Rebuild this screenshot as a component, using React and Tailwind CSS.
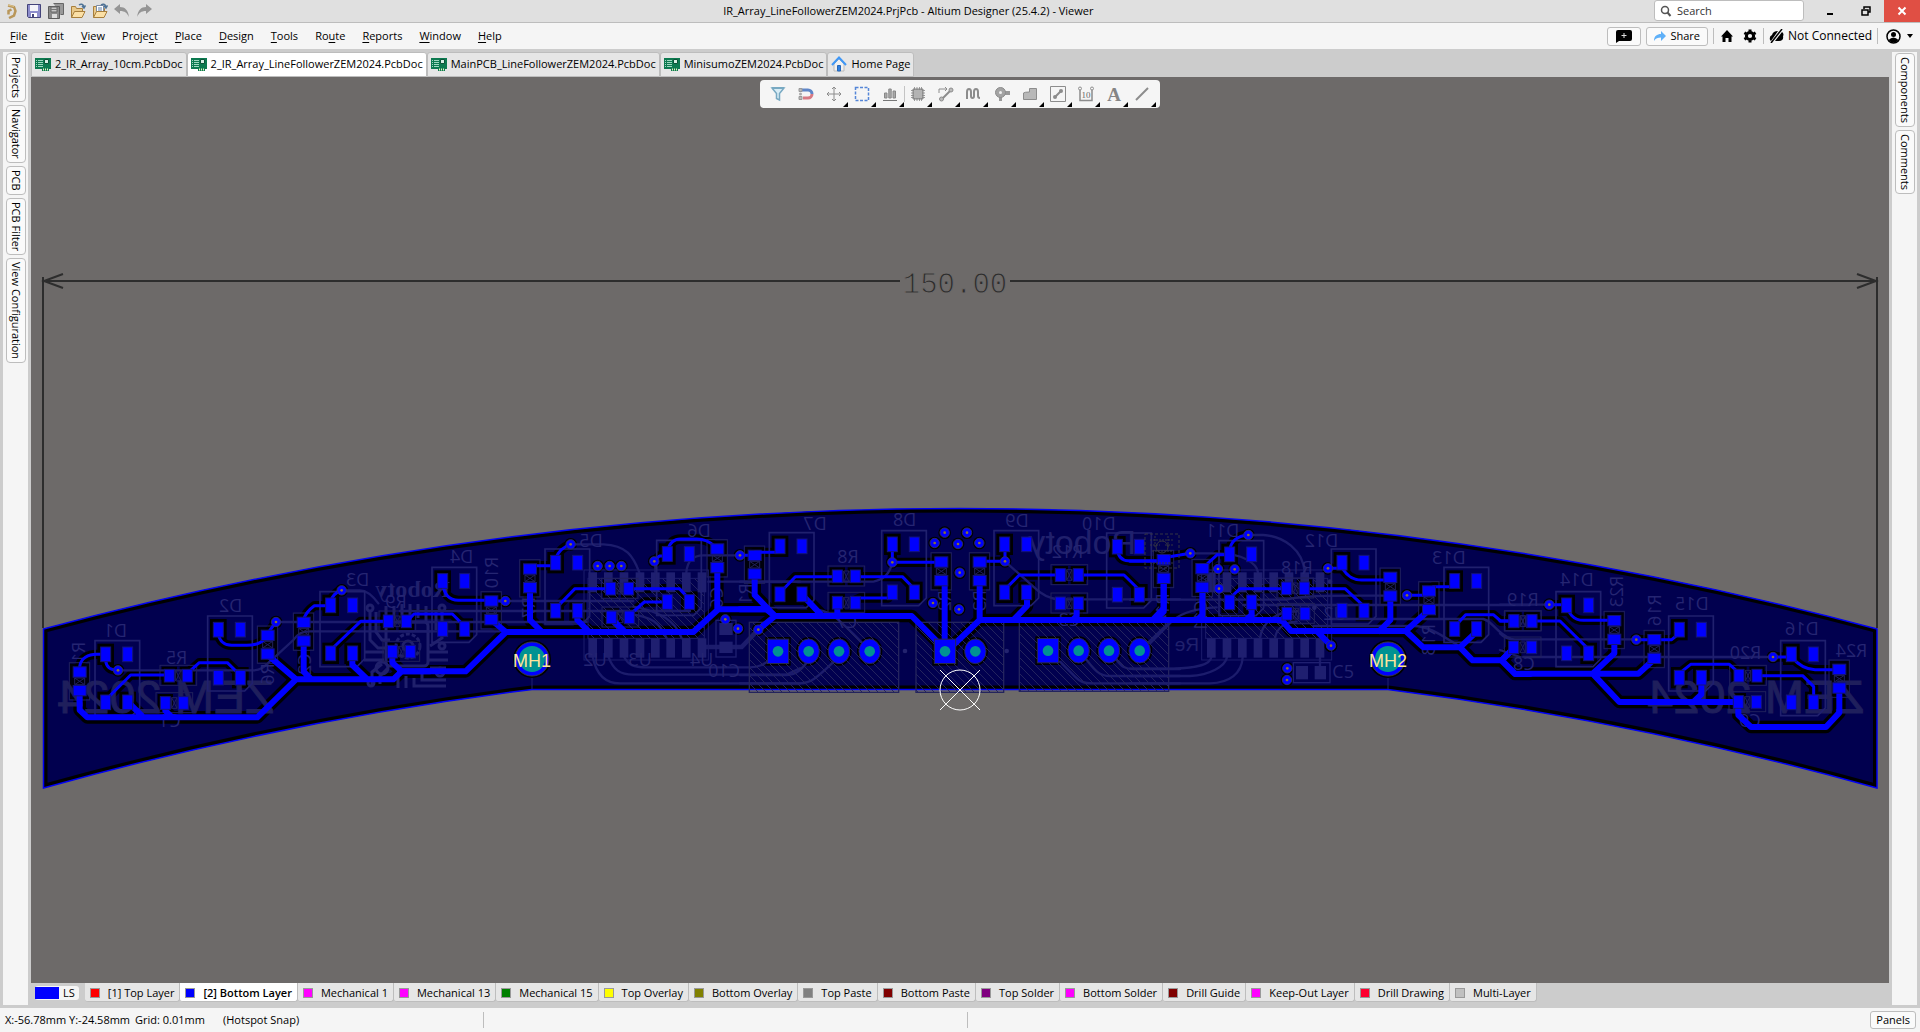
import React from "react";

/* ---------- board data: one entry per region of the board, in units of 1/3 px ---------- */
// D: LED footprints [x, y, cleared pads (TL,TR,BL,BR)], V: vertical 0603, H: horizontal 0603
const SECTIONS = [
  {
    o: [30, 500],
    D: [[195, 422, "1011"], [533, 348, "1001"], [870, 275, "1011"]],
    V: [[149, 544], [713, 434], [821, 395]],
    H: [[445, 527, "11"], [433, 609, "10"], [1102, 364, "11"], [1114, 455, "10"]],
    vias: [[264, 511], [738, 366], [935, 271]],
    thin: "M149 500C152 475 175 463 200 463H214M227 480C228 500 240 511 264 511M227 600L302 525H405M472 520L508 488H592L630 525M565 400C568 425 585 436 605 436H650C675 436 695 428 705 415M713 400L738 366M821 360C824 345 835 330 853 317H900M902 305C905 290 918 275 935 271M902 450L992 364H1075",
    thick: "M149 575V630L172 652H682L798 538H1090L1115 514H1200M713 465L798 538M821 430V515L842 536M967 465V495L1010 536M1087 460V488L1115 514M293 605L338 650M406 612V632L424 650",
    faint: "M264 511H670C700 511 710 490 740 466L790 420C805 400 815 394 840 394H1200M738 366H1200M935 271H990C1010 271 1030 290 1045 310",
    labels: [["D1", 291, 410], ["D2", 637, 336], ["D3", 1018, 257], ["R5", 472, 493], ["C1", 452, 680], ["R1", 166, 425, 90], ["R6", 732, 490, 90], ["C2", 842, 460, 90], ["R9", 1130, 325]],
  },
  {
    o: [400, 500],
    D: [[96, 202, "1001"], [435, 147, "1011"], [770, 121, "1001"]],
    V: [[274, 331], [390, 235], [952, 175], [1064, 194]],
    H: [[659, 266, "11"], [661, 352, "10"]],
    vias: [[316, 303], [512, 133], [593, 198], [629, 198], [664, 198], [763, 184], [1020, 166], [976, 358], [1014, 386], [1075, 389]],
    thin: "M128 250C132 285 150 300 175 301H260M274 303H316M20 365L42 342H157L195 380M390 197H455M467 175C475 155 490 140 512 133M467 325L525 266H620M700 266H838L869 298M688 345L733 306H790M763 184L778 168H795M803 150C810 125 825 117 842 117H890C915 117 930 125 945 140M1020 166H1055",
    thick: "M0 514H197L318 396H880L955 328H1100L1125 348H1200M390 270V360L425 395M532 330V360L565 393M633 355L675 396M274 360L318 396M952 205V328M1064 225V285L1125 348L1075 389",
    faint: "M0 366H560M0 333H870M0 394H300M316 303H700M512 133H610C680 135 700 170 718 217M859 217C862 180 880 166 910 166H1020M766 184V217M925 245H1200M578 470C590 530 620 550 660 550H1200M625 470C640 510 660 524 700 524H1160L1200 505M672 470C685 495 700 502 740 502H1050C1080 502 1095 490 1110 480M680 340C760 350 780 370 800 415M700 320C790 335 830 370 845 415",
    faintWide: "M906 441H1025L1075 389",
    labels: [["D4", 220, 188], ["D5", 608, 140], ["D6", 932, 112], ["R10", 294, 170, 90], ["R7", 406, 290, 90], ["U3", 755, 497], ["C10", 1020, 530], ["U2", 620, 497], ["C6", 968, 260, 90], ["R11", 1056, 250, 90], ["U4", 940, 497]],
    ic: [552, 210, 925, 480, [578, 625, 672, 720, 766, 812, 859, 906]],
    cap: [978, 415, true],
  },
  {
    o: [740, 490],
    D: [[88, 128, "1011"], [425, 122, "1001"], [762, 122, "1011"], [1100, 129, "1001"]],
    V: [[604, 244], [719, 244]],
    H: [[319, 259, "11"], [319, 338, "10"], [988, 255, "11"], [988, 340, "01"]],
    vias: [[614, 128], [681, 128], [584, 159], [654, 162], [718, 159], [659, 248], [657, 358], [579, 339], [457, 217], [795, 214]],
    thin: "M44 187H110M120 308L166 260H290M346 260H487L523 297M346 330L360 324H445M457 170V217H600M719 214H795V170M795 298L838 255H960M1015 255H1152L1198 300M1132 175C1134 200 1145 212 1165 212H1270",
    thick: "M0 358H80L105 378H515L615 478M187 315L245 376M292 340V376M614 275V470M719 275V390L635 470M719 390H1320M861 310V348L822 388M1010 345V378L1000 388M1271 265V355L1240 388",
    faint: "M0 555H140C165 555 180 545 206 510M0 580H180C210 580 225 570 297 500M0 275H400C430 270 450 250 457 217M235 360C270 365 290 380 370 462M795 214L880 290C900 310 930 328 960 328H1320M960 515L1005 560C1020 575 1030 580 1060 580H1320M1040 510C1060 535 1075 558 1110 558H1320M1130 510C1145 530 1155 537 1180 537H1320M1199 482L1285 400",
    labels: [["D7", 260, 121], ["D8", 529, 107], ["D9", 866, 111], ["D10", 1127, 119], ["R8", 356, 218], ["R12", 1030, 205], ["C7", 352, 415], ["C3", 1020, 408], ["R2", 632, 300, 90], ["R3", 738, 300, 90]],
    headers: [[28, 397, 448, 210], [528, 397, 263, 210], [838, 397, 448, 207]],
    sq: [[114, 484], [615, 484], [924, 482]],
    oval: [[206, 484], [297, 484], [389, 484], [706, 484], [1016, 482], [1107, 482], [1199, 482]],
    black: "M135 280H172V345H135Z",
    dots: [[495, 483], [800, 483]],
  },
  {
    o: [1130, 500],
    D: [[267, 122, "1011"], [604, 147, "1001"], [942, 202, "1011"]],
    V: [[101, 207], [217, 234], [781, 260], [897, 301]],
    H: [[496, 265, "11"], [498, 341, "10"], [1178, 364, "11"]],
    vias: [[181, 160], [355, 105], [264, 207], [314, 208], [267, 266], [594, 205], [831, 286], [603, 437], [472, 505], [471, 540]],
    thin: "M0 184H95L118 170L181 160M217 205L262 164H299M299 150C303 125 320 108 355 105M299 295L330 266H468M523 266H645L703 320M594 205H637C650 225 665 240 695 240H781M831 286H890M897 272L910 260H970M974 380L1007 344H1090L1112 363H1150",
    thick: "M0 360H455L483 393H827L880 442H990L1028 481H1115L1155 522H1200M101 240V335L75 360M217 265V345L203 358M365 310V345L350 358M471 345L453 362M781 290V360L748 393M897 330L827 393M560 393L603 437M1040 388V395L990 442M1150 445L1115 481",
    faint: "M355 105H400C460 108 520 150 524 217M181 160H260C340 160 380 190 384 217M0 550H240C300 548 335 520 338 472M0 528H180C240 525 285 500 291 472M0 506H130C190 505 240 495 244 472M60 430L130 360C160 335 200 325 260 322M340 315H1200M600 357H1060C1090 365 1100 400 1140 415M570 472V520M0 299H470C520 285 600 287 760 287M390 415C395 370 440 330 500 335M435 415C440 380 470 365 500 365M550 378H850C900 378 940 410 990 440",
    labels: [["D11", 328, 112], ["D12", 625, 140], ["D13", 1007, 191], ["R18", 548, 222], ["U2", 650, 360], ["R13", 916, 372, 90], ["R14", 118, 280, 90], ["C11", 232, 300, 90]],
    plain: [["C5", 607, 533]],
    ic: [215, 210, 605, 480, [244, 291, 337, 384, 431, 477, 524, 570]],
    cap: [544, 518, false],
    black: "M990 352H1024V420H990Z",
    dots: [[553, 323], [600, 245]],
  },
  {
    o: [1500, 530],
    D: [[168, 185, "1001"], [506, 258, "1011"], [842, 332, "1001"]],
    V: [[343, 300], [463, 357], [1018, 446]],
    H: [[69, 273, "11"], [68, 352, "10"], [744, 437, "11"], [742, 516, "10"]],
    vias: [[148, 224], [409, 329], [819, 381]],
    thin: "M0 273H41M96 273H180L260 352M148 224H201C205 250 220 271 250 271H343M409 329H515L538 310M538 430L572 403H688L716 428M772 437H908L941 470V505M819 381H875C895 405 915 418 945 419H1018",
    thick: "M5 391L45 431H278L358 516H715V555L753 591H978L1018 548V475M41 355L5 391M343 330V370L278 431H415L463 388M604 445V493L582 514",
    faint: "M0 224H148M0 310C15 325 25 328 45 328H409M70 381H819M60 381L0 360",
    labels: [["D14", 281, 167], ["D15", 626, 241], ["D16", 956, 315], ["R19", 116, 228], ["R20", 784, 388], ["R24", 1102, 380], ["C8", 104, 420], ["C9", 782, 592], ["R23", 369, 137, 90], ["R16", 484, 193, 90]],
  },
];

const PADS = [[32, 41], [98, 41], [32, 185], [98, 185]];

function Sec({ s, children }) {
  return <g transform={`translate(${s.o[0]} ${s.o[1]}) scale(0.33333)`}>{children}</g>;
}

function Rects({ list, w, h, fill, stroke }) {
  return list.map(([x, y], i) => (
    <rect key={i} x={x - w / 2} y={y - h / 2} width={w} height={h} fill={fill} stroke={stroke} strokeWidth={stroke ? 3 : 0} />
  ));
}

function Clearance({ s }) {
  const led = [];
  s.D.forEach(([x, y, m]) => PADS.forEach(([px, py], i) => m[i] === "1" && led.push([x + px, y + py])));
  const hp = [];
  s.H.forEach(([x, y, m]) => [-27, 27].forEach((d, i) => m[i] === "1" && hp.push([x + d, y])));
  return (
    <Sec s={s}>
      <g fill="none" stroke="#000" strokeLinecap="round" strokeLinejoin="round">
        <path d={s.thin} strokeWidth="28" />
        <path d={s.thick} strokeWidth="38" />
      </g>
      <Rects list={led} w={50} h={64} fill="#000" />
      <Rects list={hp} w={46} h={54} fill="#000" />
      {s.V.map(([x, y], i) => (
        <rect key={i} x={x - 29} y={y - 53} width="58" height="106" fill="#000" opacity="0.85" />
      ))}
      {s.vias.map(([x, y], i) => <circle key={i} cx={x} cy={y} r="19" fill="#000" />)}
      {s.black && <path d={s.black} fill="#000" />}
      {s.sq && <Rects list={s.sq} w={76} h={86} fill="#000" />}
      {s.oval && s.oval.map(([x, y], i) => <ellipse key={i} cx={x} cy={y} rx="38" ry="43" fill="#000" />)}
    </Sec>
  );
}

function Label({ d, mirror = true }) {
  const [t, x, y, r] = d;
  const tf = r ? `translate(${x} ${y}) rotate(-90) scale(-1 1)` : mirror ? `translate(${x} ${y}) scale(-1 1)` : `translate(${x} ${y})`;
  return (
    <text transform={tf} fontSize="54" fill="#252572" fontFamily="'Open Sans','Noto Sans',sans-serif">
      {t}
    </text>
  );
}

function Overlay({ s }) {
  return (
    <Sec s={s}>
      <g fill="none" stroke="#1c1c6c" strokeLinecap="round">
        <path d={s.faint} strokeWidth="7" />
        {s.faintWide && <path d={s.faintWide} strokeWidth="14" />}
      </g>
      {s.headers && s.headers.map(([x, y, w, h], i) => (
        <rect key={i} x={x} y={y} width={w} height={h} fill="url(#hatch)" stroke="#24245e" strokeWidth="4" />
      ))}
      {s.ic && (
        <g>
          <rect x={s.ic[0]} y={s.ic[1]} width={s.ic[2] - s.ic[0]} height={s.ic[3] - s.ic[1]} fill="none" stroke="#1c1c6c" strokeWidth="3" />
          <rect x={s.ic[0] + 12} y={s.ic[1] + 25} width={s.ic[2] - s.ic[0] - 24} height="180" fill="url(#hatch)" stroke="#1c1c6c" strokeWidth="3" />
          {s.ic[4].map((x) => (
            <g key={x} fill="#1f1f70">
              <rect x={x - 13} y="217" width="26" height="60" />
              <rect x={x - 13} y="415" width="26" height="58" />
            </g>
          ))}
        </g>
      )}
      {s.cap && (
        <g transform={`translate(${s.cap[0]} ${s.cap[1]})${s.cap[2] ? " rotate(90)" : ""}`}>
          <rect x="-54" y="-30" width="110" height="60" fill="none" stroke="#1f1f70" strokeWidth="4" />
          <rect x="-46" y="-20" width="36" height="40" fill="#1f1f70" />
          <rect x="10" y="-20" width="34" height="40" fill="#1f1f70" />
        </g>
      )}
      {s.D.map(([x, y], i) => (
        <path key={i} d={`M${x} ${y}h134v202l-23 23h-111z`} fill="none" stroke="#20206e" strokeWidth="5" />
      ))}
      {s.V.map(([x, y], i) => (
        <g key={i} fill="none" stroke="#20205c" strokeWidth="3">
          <rect x={x - 31} y={y - 56} width="61" height="112" />
          <path d={`M${x - 15} ${y - 10}h30v20h-30zl30 20m0-20l-30 20`} />
        </g>
      ))}
      {s.H.map(([x, y], i) => (
        <g key={i} fill="none" stroke="#20205c" strokeWidth="3">
          <rect x={x - 55} y={y - 31} width="110" height="60" />
          <path d={`M${x - 8} ${y - 16}h16v32h-16zl16 32m0-32l-16 32`} />
        </g>
      ))}
      {s.dots && s.dots.map(([x, y], i) => <circle key={i} cx={x} cy={y} r="7" fill="#23236e" />)}
      {s.labels.map((d, i) => <Label key={i} d={d} />)}
      {s.plain && s.plain.map((d, i) => <Label key={i} d={d} mirror={false} />)}
    </Sec>
  );
}

function Copper({ s }) {
  const led = [];
  s.D.forEach(([x, y]) => PADS.forEach(([px, py]) => led.push([x + px, y + py])));
  const h = s.H.flatMap(([x, y]) => [[x - 27, y], [x + 27, y]]);
  const v = s.V.flatMap(([x, y]) => [[x, y - 28], [x, y + 28]]);
  return (
    <Sec s={s}>
      <g fill="none" stroke="#0000ff" strokeLinecap="round" strokeLinejoin="round">
        <path d={s.thin} strokeWidth="9" />
        <path d={s.thick} strokeWidth="18" />
      </g>
      <Rects list={led} w={30} h={44} fill="#0000ff" stroke="#141478" />
      <Rects list={h} w={30} h={38} fill="#0000ff" stroke="#141478" />
      <Rects list={v} w={39} h={31} fill="#0000ff" stroke="#141478" />
      {s.vias.map(([x, y], i) => (
        <g key={i}>
          <circle cx={x} cy={y} r="14" fill="#0000ff" stroke="#2a2a70" strokeWidth="3" />
          <circle cx={x} cy={y} r="4" fill="#8a7434" />
        </g>
      ))}
      {s.sq && <Rects list={s.sq} w={64} h={73} fill="#0000ff" stroke="#28284e" />}
      {s.oval && s.oval.map(([x, y], i) => <ellipse key={i} cx={x} cy={y} rx="32" ry="37" fill="#0000ff" stroke="#28284e" strokeWidth="3" />)}
      {[...(s.sq || []), ...(s.oval || [])].map(([x, y], i) => <circle key={i} cx={x} cy={y} r="16" fill="#009292" />)}
    </Sec>
  );
}

function Hole({ x, label }) {
  return (
    <g>
      <circle cx={x} cy="659" r="19" fill="#000" />
      <circle cx={x} cy="659" r="17" fill="#0000ff" stroke="#3a3a4a" />
      <circle cx={x} cy="659" r="13" fill="#009292" />
      <path d={`M${x} 678v11`} stroke="#20206e" />
      <text x={x} y="667" textAnchor="middle" fontSize="18" fill="#ffe49a" fontFamily="'Liberation Sans',sans-serif">{label}</text>
    </g>
  );
}

const EDGE = "M43.500 629A3547 3547 0 0 1 1877 629V788A3394 3394 0 0 0 1388 689.500H532A3394 3394 0 0 0 43.500 788Z";

function Board() {
  return (
    <svg viewBox="31 77 1858 906" className="block h-full w-full" role="img" aria-label="Bottom layer of the PCB">
      <defs>
        <clipPath id="edge"><path d={EDGE} /></clipPath>
        <pattern id="hatch" width="24" height="24" patternUnits="userSpaceOnUse">
          <path d="M0 0L24 24" stroke="#24245e" strokeWidth="3" />
        </pattern>
      </defs>
      <g fill="none" stroke="#2d2d2d" strokeWidth="2">
        <path d="M43 277V628M1877 277V628M44 281H900M1010 281H1876" />
        <path d="M63 274L44 281L63 288M1857 274L1876 281L1857 288" />
      </g>
      <text x="955" y="293" textAnchor="middle" fontSize="29" fill="#2d2d2d" stroke="#6d6a69" strokeWidth="1" fontFamily="'Liberation Mono',monospace">150.00</text>
      <path d={EDGE} fill="#01004f" />
      <g clipPath="url(#edge)">
        <path d={EDGE} fill="none" stroke="#000" strokeWidth="8" />
      </g>
      <path d={EDGE} fill="none" stroke="#0000f4" strokeWidth="1.500" />
      {SECTIONS.map((s, i) => <Clearance key={i} s={s} />)}
      <g fill="#1f1f5c" stroke="#1f1f5c" fontFamily="'Liberation Sans',sans-serif" fontSize="47">
        <text transform="translate(274 713) scale(-1 1)">ZEM 2024</text>
        <text transform="translate(1864 713) scale(-1 1)">ZEM 2024</text>
      </g>
      <g fill="#20206c" fontFamily="'Liberation Sans',sans-serif">
        <text transform="translate(450 597) scale(-1 1)" fontSize="24" fontFamily="'Liberation Serif',serif" fontWeight="700">Roboty</text>
        <text transform="translate(1136 554) scale(-1 1)" fontSize="34">Roboty</text>
        <text transform="translate(1199 651) scale(-1 1)" fontSize="19">Re</text>
      </g>
      {/* chip emblem */}
      <g fill="none" stroke="#20206c" strokeWidth="3">
        <path d="M370 610V640L378 648H386M376 612V632L382 640H390M386 606V622M394 606V620M402 604V618M410 604V618M418 604V618M426 606V622M436 612V630M442 612V638L430 646M364 652H384M364 660H384M428 652H448M428 660H448M372 686V672L382 664M380 684V676L388 668M398 688V676M406 688V676M414 678V686H446M422 674V680H446M430 668H446" />
        <rect x="386" y="622" width="42" height="44" rx="4" />
        <circle cx="408" cy="646" r="12" strokeDasharray="4 2" />
        <circle cx="408" cy="646" r="5" />
        <circle cx="370" cy="608" r="3" /><circle cx="442" cy="608" r="3" />
        <circle cx="442" cy="646" r="3" /><circle cx="371" cy="683" r="3" />
        <circle cx="382" cy="668" r="6" /><circle cx="440" cy="672" r="4" />
      </g>
      {SECTIONS.map((s, i) => <Overlay key={i} s={s} />)}
      {SECTIONS.map((s, i) => <Copper key={i} s={s} />)}
      {/* fine-grained marker over R14 */}
      <g fill="none" stroke="#343444" strokeWidth="1">
        <path d="M1145 534h34v34h-34z" strokeDasharray="3 2" />
        <path d="M1150 540h24M1150 545h10m5 0h9M1152 551h20M1150 563h24M1155 536v12M1168 536v12" strokeDasharray="2 1" />
        <circle cx="1162" cy="547" r="6" />
      </g>
      <path d="M1158 558l12-2v6h-11z" fill="#0000ff" />
      <Hole x={532} label="MH1" />
      <Hole x={1388} label="MH2" />
      <g fill="none" stroke="#fff">
        <circle cx="960" cy="690" r="20" />
        <path d="M940 670l40 40M980 670l-40 40" />
      </g>
    </svg>
  );
}

/* ---------- icons ---------- */
const Svg = ({ w = 16, h = 16, children, ...p }) => (
  <svg width={w} height={h} viewBox={`0 0 ${w} ${h}`} fill="none" className="block shrink-0" aria-hidden="true" {...p}>{children}</svg>
);

const AltiumIcon = () => <Svg><path d="M4 2.500l6 1.500 1.500 4-1.500 4.500-5 2.500M4.500 11.500V8l3-1.500" stroke="#b9975a" strokeWidth="2.500" /><path d="M4 2l6 1.500" stroke="#dcc48c" /></Svg>;
const SaveIcon = () => <Svg><path d="M1.500 1.500h13v13h-12l-1-1z" fill="#8d8dcc" stroke="#44447a" /><path d="M4 2h8v6H4z" fill="#f4f4f8" /><path d="M5 10h6v4H5z" fill="#fff" /><path d="M6 11h2v3H6z" fill="#44447a" /></Svg>;
const SaveAllIcon = () => <Svg><path d="M5.500.500h10v11h-3" fill="#999" stroke="#666" /><path d="M.500 3.500h11v12h-11z" fill="#8b8b8b" stroke="#5d5d5d" /><path d="M3 4h6v5H3z" fill="#c6c6c6" stroke="#666" /><path d="M4 11h5v4H4z" fill="#ddd" /><path d="M3 6.500h6" stroke="#777" /></Svg>;
const Folder = ({ doc }) => (
  <Svg>
    <path d="M1.500 14.500v-11h4l1 2h6v3" fill="#e9c98a" stroke="#a87f3c" />
    {doc && <><path d="M4.500 2.500h7v8h-7z" fill="#fff" stroke="#7a8ba5" /><path d="M6 5h4M6 7h4" stroke="#5a7ca8" /></>}
    <path d="M1.500 14.500l3-6h10.500l-3 6z" fill="#fbe0a6" stroke="#a87f3c" />
    <path d="M9 2c2-1.500 4-1 5 2m-2-1l2 2 1.500-2.500" stroke="#4f7396" strokeWidth="1.500" />
  </Svg>
);
const UndoIcon = ({ flip }) => <Svg transform={flip ? "scale(-1 1)" : undefined}><path d="M0 6l6-5v3c5 0 8 3 9 10-2-4-4-6-9-6v3z" fill="#959595" /></Svg>;
const PcbIcon = () => (
  <Svg w={16} h={13}>
    <path d="M0 0h16v11h-2v2H7v-2H0z" fill="#0d7a50" /><path d="M9.500 1.500h4v4h-4z" fill="#d8eee4" stroke="#0a5538" />
    <path d="M1 2.500h1M1 4.500h1M1 6.500h1M1 8.500h1M3 2.500h5M3 4.500h5M3 6.500h5M3 8.500h5" stroke="#9fd8c0" /><path d="M8 11.500h1M10 11.500h1M12 11.500h1" stroke="#e9f7c0" strokeWidth="2" />
  </Svg>
);
const HomeColor = () => <Svg><path d="M3 8v7h10V8L8 3z" fill="#f1f1f1" stroke="#bbb" /><path d="M1 9l7-7.500L15 9" stroke="#3f97f6" strokeWidth="2" /><path d="M6.500 9.500h3V15h-3z" fill="#2f7fe0" stroke="#2467b8" /></Svg>;

const G = "#8c8c8c";
const TOOLS = [
  ["Filter", <><path d="M2 2h12L9.500 7.500V14l-3-1.500v-5z" fill="#d8ecf5" stroke="#78a9c2" strokeWidth="1.500" /><path d="M2 2h12" stroke="#78a9c2" strokeWidth="2" /></>, false],
  ["Snapping", <><path d="M4 4h6a4 4 0 0 1 4 4" stroke="#5f86c8" strokeWidth="3" /><path d="M14 8a4 4 0 0 1-4 4H5" stroke="#d77a84" strokeWidth="3" /><path d="M1 2.500h3v3H1zM1 10.500h3v3H1z" fill="#b9b9b9" stroke="#999" /><circle cx="2.500" cy="8" r="1.500" fill="#aaa" /></>, false],
  ["Place", <><path d="M8 1v14M1 8h14" stroke={G} /><path d="M6 3l2-2 2 2M6 13l2 2 2-2M3 6L1 8l2 2M13 6l2 2-2 2" stroke={G} /></>, true],
  ["Select", <path d="M1.500 1.500h13v13h-13z" stroke="#5586d8" strokeWidth="1.500" strokeDasharray="3 1.500" />, true],
  ["Align", <><path d="M2.500 7h2.500v5H2.500zM6.800 3h2.400v9H6.800zM11 5h2.500v7H11z" fill="#aaa" stroke="#888" /><path d="M1 14.500h14" stroke="#777" /></>, true],
  ["Component", <><path d="M3 3h10v10H3z" fill="#a3a3a3" stroke="#858585" /><path d="M4.500 1v14M7 1v14M9.500 1v14M11.500 1v14M1 4.500h14M1 7h14M1 9.500h14M1 11.500h14" stroke="#858585" opacity=".8" /><path d="M4 4h8v8H4z" fill="#b3b3b3" /></>, true],
  ["Route", <><path d="M1 7V3h8M7 1l2 2-2 2" stroke={G} /><path d="M4 13L12 5" stroke={G} strokeWidth="2" /><circle cx="3.500" cy="13" r="2" fill="#bbb" stroke={G} /><circle cx="13" cy="4" r="2" fill="#bbb" stroke={G} /></>, true],
  ["Length tuning", <path d="M1 13V6q0-3 2-3t2 3v4q0 2 1.500 2T8 10V6q0-3 2-3t2 3v4q0 2 2 2" stroke={G} strokeWidth="2" />, true],
  ["Via", <><path d="M7 5h9v4H7zM5 8h3v7H5z" fill="#999" /><circle cx="6.500" cy="6.500" r="5" fill="#a3a3a3" stroke={G} /><circle cx="6.500" cy="6.500" r="1.500" fill="#eee" /></>, true],
  ["Polygon", <path d="M1.500 13.500V7q1-1 6-1V2.500h7v11z" fill="#b8b8b8" stroke={G} />, true],
  ["Room", <><path d="M.500.500h15v15h-15z" stroke={G} /><path d="M5 11l6-6" stroke={G} strokeWidth="2" /><circle cx="5" cy="11" r="2" fill={G} /><circle cx="11" cy="5" r="2" fill={G} /></>, true],
  ["Dimension", <><path d="M2 4v10.500h12V4" stroke={G} strokeWidth="1.500" /><circle cx="2" cy="2.500" r="1.500" stroke={G} /><circle cx="14" cy="2.500" r="1.500" stroke={G} /><text x="8" y="12" fontSize="9" textAnchor="middle" fill="#666" fontFamily="'Liberation Serif',serif">10</text></>, true],
  ["String", <text x="8" y="15" fontSize="19" textAnchor="middle" fontWeight="700" fill="#858585" fontFamily="'Liberation Serif',serif">A</text>, true],
  ["Line", <path d="M2 14L14 2" stroke={G} strokeWidth="2" />, true],
];

/* ---------- chrome ---------- */
const MENUS = [["", "F", "ile"], ["", "E", "dit"], ["", "V", "iew"], ["Proje", "c", "t"], ["", "P", "lace"], ["", "D", "esign"], ["", "T", "ools"], ["Ro", "u", "te"], ["", "R", "eports"], ["", "W", "indow"], ["", "H", "elp"]];
const DOCS = ["2_IR_Array_10cm.PcbDoc", "2_IR_Array_LineFollowerZEM2024.PcbDoc", "MainPCB_LineFollowerZEM2024.PcbDoc", "MinisumoZEM2024.PcbDoc", "Home Page"];
const LAYERS = [
  ["[1] Top Layer", "bg-[#ff0000]"], ["[2] Bottom Layer", "bg-[#0000ff]"], ["Mechanical 1", "bg-[#ff00ff]"], ["Mechanical 13", "bg-[#ff00ff]"],
  ["Mechanical 15", "bg-[#008000]"], ["Top Overlay", "bg-[#ffff00]"], ["Bottom Overlay", "bg-[#808000]"], ["Top Paste", "bg-[#808080]"],
  ["Bottom Paste", "bg-[#800000]"], ["Top Solder", "bg-[#800080]"], ["Bottom Solder", "bg-[#ff00ff]"], ["Drill Guide", "bg-[#800000]"],
  ["Keep-Out Layer", "bg-[#ff00ff]"], ["Drill Drawing", "bg-[#ff0030]"], ["Multi-Layer", "bg-[#c0c0c0]"],
];

function SidePanel({ items }) {
  return (
    <nav className="my-[3px] flex w-[25px] shrink-0 flex-col items-center gap-[3px] bg-[#f5f5f5] pt-px">
      {items.map((t) => (
        <button key={t} className="flex w-5 shrink-0 justify-center rounded-[4px] border border-[#bdbdbd] bg-[#fafafa] py-[3px]">
          <span className="leading-[18px] [writing-mode:vertical-rl]">{t}</span>
        </button>
      ))}
    </nav>
  );
}

const Sep = () => <span className="h-4 w-px bg-[#bdbdbd]" />;

export default function App() {
  return (
    <div className="flex h-screen flex-col overflow-hidden whitespace-nowrap bg-[#cccccc] font-['Open_Sans','Noto_Sans',sans-serif] text-[11px] leading-4 text-black">
      <header className="grid h-[23px] shrink-0 grid-cols-[7fr_auto_8fr] items-center border-b border-[#bdbdbd] bg-[#e0e0e0]">
        <div className="flex items-center gap-[6px] pl-1">
          {[["Altium", <AltiumIcon />], ["Save", <SaveIcon />], ["Save all", <SaveAllIcon />], ["Open", <Folder />], ["Open project", <Folder doc />], ["Undo", <UndoIcon />], ["Redo", <UndoIcon flip />]].map(([n, i]) => (
            <button key={n} aria-label={n}>{i}</button>
          ))}
        </div>
        <h1>IR_Array_LineFollowerZEM2024.PrjPcb - Altium Designer (25.4.2) - Viewer</h1>
        <div className="flex h-[22px] items-start justify-end">
          <label className="mr-2 flex h-[21px] w-[150px] items-center gap-[5px] rounded-[3px] border border-[#bdbdbd] bg-white px-[5px]">
            <Svg w={12} h={12}><circle cx="5" cy="5" r="3.500" stroke="#555" strokeWidth="1.500" /><path d="M7.500 7.500l3 3.500" stroke="#555" strokeWidth="2" /></Svg>
            <input type="search" aria-label="Search" placeholder="Search" className="w-full min-w-0 bg-transparent outline-none placeholder:text-[#333]" />
          </label>
          <button aria-label="Minimize" className="grid h-[22px] w-9 place-items-center"><Svg w={10} h={10}><path d="M2 8h6" stroke="#000" strokeWidth="2" /></Svg></button>
          <button aria-label="Restore" className="grid h-[22px] w-9 place-items-center"><Svg w={10} h={10}><path d="M3 3V1h6v5H7" stroke="#000" strokeWidth="1.500" /><path d="M1 4h6v5H1z" stroke="#000" strokeWidth="1.500" /></Svg></button>
          <button aria-label="Close" className="grid h-[22px] w-9 place-items-center bg-[#e04f44]"><Svg w={10} h={10}><path d="M1.500 1.500l7 7M8.500 1.500l-7 7" stroke="#fff" strokeWidth="2" /></Svg></button>
        </div>
      </header>

      <div className="flex h-[26px] shrink-0 items-center justify-between bg-[#f5f5f5] pl-[10px] pr-[7px]">
        <nav className="flex gap-[17px]">
          {MENUS.map(([a, k, b]) => (
            <button key={a + k + b}>{a}<span className="underline underline-offset-2">{k}</span>{b}</button>
          ))}
        </nav>
        <div className="flex items-center">
          <button aria-label="Comments" className="mr-[5px] grid h-[19px] w-[34px] place-items-center rounded-[3px] border border-[#bdbdbd] bg-[#fafafa]">
            <Svg w={16} h={13}><path d="M2 0h12q2 0 2 2v7q0 2-2 2H3l-3 2V2q0-2 2-2z" fill="#000" /><path d="M8 3v5M5.500 5.500h5" stroke="#ddd" /></Svg>
          </button>
          <button className="mr-[5px] flex h-[19px] items-center gap-1 rounded-[3px] border border-[#bdbdbd] bg-[#fafafa] px-[7px]">
            <Svg w={12} h={12}><path d="M0 11c0-5 3-7 7-7V1l5 5-5 5V7.500C4 7.500 1.500 8 0 11z" fill="#5fb0f8" /></Svg>Share
          </button>
          <Sep />
          <button aria-label="Home" className="mx-[6px]"><Svg w={14} h={14}><path d="M7 1l6 6.500h-1.500V13h-3V9h-3v4h-3V7.500H1z" fill="#000" /></Svg></button>
          <button aria-label="Settings" className="ml-[3px] mr-[6px]"><Svg w={14} h={14}><circle cx="7" cy="7" r="3.600" stroke="#000" strokeWidth="3" /><path d="M7 .500v2M7 11.500v2M1.400 3.700l1.700 1M10.900 9.300l1.700 1M1.400 10.300l1.700-1M10.900 4.700l1.700-1" stroke="#000" strokeWidth="3" /></Svg></button>
          <Sep />
          <button className="mx-[5px] flex items-center gap-1 text-[12px]">
            <Svg w={15} h={14}><path d="M1 11q-1-4 2-5 1-4 6-4l-7 10zM14 4q1 2 0 3 1 5-4 5H6l7-9z" fill="#000" /><path d="M2 14L13 0" stroke="#000" strokeWidth="1.500" /></Svg>Not Connected
          </button>
          <Sep />
          <button aria-label="Account" className="ml-2 flex items-center gap-[6px]">
            <Svg w={15} h={15}><circle cx="7.500" cy="7.500" r="6.500" stroke="#000" strokeWidth="1.500" /><circle cx="7.500" cy="5.500" r="2.500" fill="#000" /><path d="M2.500 11q5-5 10 0-5 5-10 0z" fill="#000" /></Svg>
            <Svg w={6} h={4}><path d="M0 0h6L3 4z" fill="#000" /></Svg>
          </button>
        </div>
      </div>

      <div className="flex min-h-0 flex-1 gap-[3px] px-[3px]">
        <SidePanel items={["Projects", "Navigator", "PCB", "PCB Filter", "View Configuration"]} />
        <main className="flex min-w-0 flex-1 flex-col">
          <div role="tablist" className="flex h-7 shrink-0 items-end pt-[3px]">
            {DOCS.map((t, i) => (
              <button key={t} role="tab" aria-selected={i === 1} className={"flex h-[25px] items-center gap-1 rounded-t-[3px] border border-[#bdbdbd] px-[3px] pb-px " + (i === 1 ? "bg-white" : "bg-[#e6e6e6]")}>
                {i === 4 ? <HomeColor /> : <PcbIcon />}{t}
              </button>
            ))}
          </div>
          <div className="relative min-h-0 flex-1 bg-[#6d6a69]">
            <Board />
            <div role="toolbar" className="absolute left-1/2 top-[3px] flex h-7 -translate-x-1/2 items-stretch rounded-[4px] bg-[#f5f5f5] px-1">
              {TOOLS.map(([n, icon, menu], i) => (
                <button key={n} aria-label={n} className={"relative grid w-7 place-items-center " + (i === 5 ? "before:absolute before:left-0 before:top-[6px] before:h-4 before:w-px before:bg-[#c4c4c4]" : "")}>
                  <Svg>{icon}</Svg>
                  {menu && <span className="absolute bottom-[1px] right-0 h-[5px] w-[5px] bg-black [clip-path:polygon(100%_0,100%_100%,0_100%)]" />}
                </button>
              ))}
            </div>
          </div>
          <div role="tablist" className="flex h-[25px] shrink-0 items-start">
            <button className="ml-1 mr-[6px] mt-[3px] flex h-[14px] items-center gap-1 rounded-[3px] bg-[#f5f5f5] pr-1">
              <span className="h-3 w-6 bg-[#0000ff]" />LS
            </button>
            {LAYERS.map(([t, c], i) => (
              <button key={t} role="tab" aria-selected={i === 1} className={"flex h-[19px] items-center gap-2 rounded-b-[3px] border-b border-r border-[#bdbdbd] pl-[5px] pr-[5px] pt-px " + (i === 1 ? "bg-white font-semibold" : "bg-[#e6e6e6]")}>
                <span className={"h-[10px] w-[10px] border border-[#999] " + c} />{t}
              </button>
            ))}
          </div>
        </main>
        <SidePanel items={["Components", "Comments"]} />
      </div>

      <footer className="grid h-6 shrink-0 grid-cols-[25fr_25fr_49fr] items-center bg-[#f5f5f5] pr-1">
        <div className="flex items-center border-r border-[#bdbdbd] pl-[5px]">
          <span className="w-[130px]">X:-56.78mm Y:-24.58mm</span>
          <span className="w-[88px]">Grid: 0.01mm</span>
          <span>(Hotspot Snap)</span>
        </div>
        <div className="h-4 border-r border-[#bdbdbd]" />
        <div className="flex justify-end">
          <button className="h-[18px] rounded-[3px] border border-[#bdbdbd] bg-[#fafafa] px-[5px]">Panels</button>
        </div>
      </footer>
    </div>
  );
}
